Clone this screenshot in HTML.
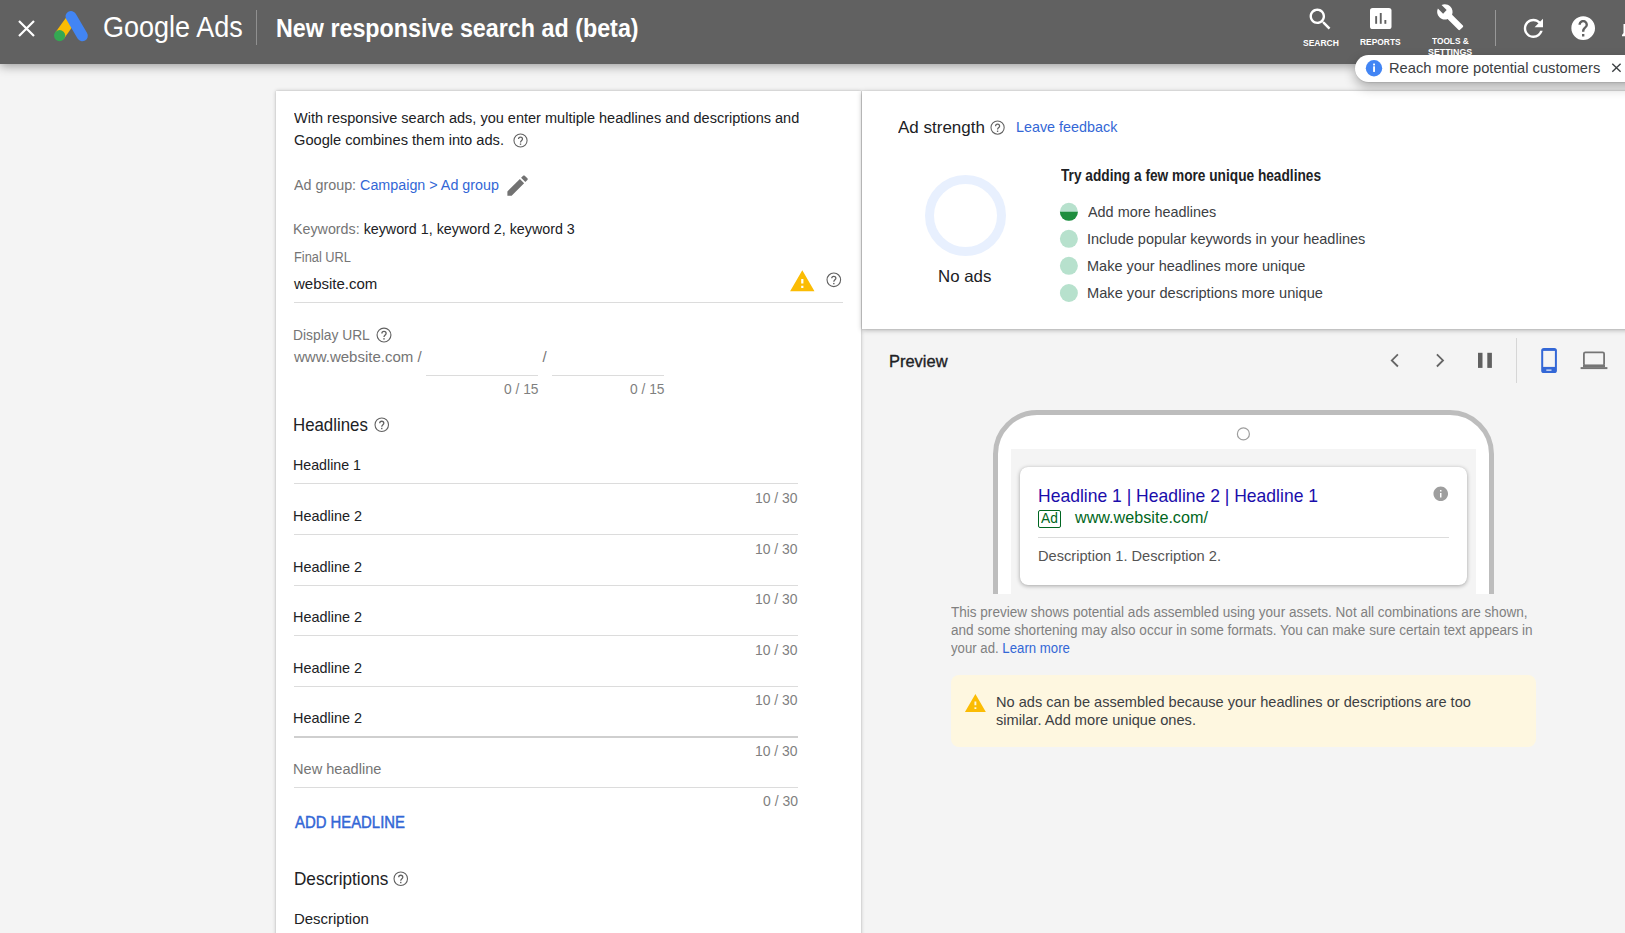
<!DOCTYPE html>
<html><head><meta charset="utf-8"><title>New responsive search ad (beta)</title>
<style>
html,body{margin:0;padding:0}
body{width:1625px;height:933px;overflow:hidden;position:relative;background:#f4f4f4;font-family:"Liberation Sans",sans-serif;color:#202124}
.a{position:absolute}
.tx{position:absolute;white-space:nowrap;transform-origin:0 0}
svg{position:absolute;overflow:visible}
.hl{position:absolute;height:1px;background:#dcdcdc}
</style></head><body>
<!-- left card -->
<div class="a" style="left:276px;top:91px;width:585px;height:900px;background:#fff;box-shadow:0 0 4px rgba(0,0,0,.22),0 0 1px rgba(0,0,0,.2)"></div>
<!-- right top card -->
<div class="a" style="left:862px;top:91px;width:800px;height:238px;background:#fff;box-shadow:0 1px 5px rgba(0,0,0,.3),0 0 1px rgba(0,0,0,.2)"></div>
<!-- header -->
<div class="a" style="left:0;top:0;width:1625px;height:64px;background:#616161;box-shadow:0 2px 10px rgba(0,0,0,.38)"></div>
<!-- close X -->
<svg style="left:0;top:0" width="1" height="1"><path d="M19 21 L34 36 M34 21 L19 36" stroke="#fff" stroke-width="2.2" fill="none"/></svg>
<!-- logo -->
<svg style="left:0;top:0" width="1" height="1">
<line x1="71.5" y1="19" x2="59.6" y2="35.6" stroke="#fbbc04" stroke-width="10.5" stroke-linecap="butt"/>
<circle cx="59.6" cy="35.6" r="5.6" fill="#34a853"/>
<line x1="71" y1="16.5" x2="82.3" y2="35.8" stroke="#4285f4" stroke-width="11" stroke-linecap="round"/>
</svg>
<div class="a" style="left:256px;top:10px;width:1px;height:35px;background:rgba(255,255,255,.3)"></div>
<!-- search icon -->
<svg style="left:1306.3px;top:5.1px" width="28.6" height="28.6" viewBox="0 0 24 24"><path fill="#fff" d="M15.5 14h-.79l-.28-.27C15.41 12.59 16 11.11 16 9.5 16 5.910 13.09 3 9.5 3S3 5.91 3 9.5 5.91 16 9.5 16c1.61 0 3.09-.59 4.23-1.57l.27.28v.79l5 4.99L20.49 19l-4.99-5zm-6 0C7.01 14 5 11.99 5 9.5S7.01 5 9.5 5 14 7.01 14 9.5 11.99 14 9.5 14z"/></svg>
<!-- reports icon -->
<svg style="left:0;top:0" width="1" height="1"><rect x="1370" y="8" width="21.5" height="21" rx="2.6" fill="#fff"/><rect x="1375.2" y="16.1" width="1.9" height="7.7" fill="#616161"/><rect x="1379.8" y="13" width="1.9" height="10.8" fill="#616161"/><rect x="1384.4" y="20" width="1.9" height="3.8" fill="#616161"/></svg>
<!-- wrench -->
<svg style="left:1435.9px;top:2.9px" width="28.4" height="28.4" viewBox="0 0 24 24"><path fill="#fff" d="M22.7 19l-9.1-9.1c.9-2.3.4-5-1.5-6.9-2-2-5-2.4-7.4-1.3L9 6 6 9 1.6 4.7C.4 7.1.9 10.1 2.9 12.1c1.9 1.9 4.6 2.4 6.9 1.5l9.1 9.1c.4.4 1 .4 1.4 0l2.3-2.3c.5-.4.5-1.1.1-1.4z"/></svg>
<div class="a" style="left:1495px;top:10px;width:1px;height:36px;background:rgba(255,255,255,.35)"></div>
<!-- refresh -->
<svg style="left:1519.4px;top:14.4px" width="28.8" height="28.8" viewBox="0 0 24 24"><path fill="#fff" d="M17.65 6.35C16.2 4.9 14.21 4 12 4c-4.42 0-7.99 3.58-7.99 8s3.57 8 7.99 8c3.73 0 6.84-2.55 7.73-6h-2.08c-.82 2.33-3.04 4-5.65 4-3.31 0-6-2.69-6-6s2.690-6 6-6c1.66 0 3.14.69 4.22 1.78L13 11h7V4l-2.35 2.35z"/></svg>
<!-- help -->
<svg style="left:1568.6px;top:14.1px" width="28.4" height="28.4" viewBox="0 0 24 24"><path fill="#fff" d="M12 2C6.48 2 2 6.48 2 12s4.48 10 10 10 10-4.48 10-10S17.52 2 12 2zm1 17h-2v-2h2v2zm2.07-7.75l-.9.92C13.45 12.9 13 13.5 13 15h-2v-.5c0-1.1.45-2.1 1.17-2.83l1.24-1.26c.37-.36.59-.86.59-1.41 0-1.1-.9-2-2-2s-2 .9-2 2H8c0-2.21 1.79-4 4-4s4 1.79 4 4c0 .88-.36 1.68-.93 2.25z"/></svg>
<!-- bell fragment -->
<svg style="left:0;top:0" width="1" height="1"><path d="M1623.5 24 V33 L1622 35 V36.2 H1625 V24z" fill="#fff"/></svg>
<!-- popup -->
<div class="a" style="left:1355px;top:55px;width:320px;height:27px;border-radius:13.5px;background:#fff;box-shadow:0 5px 12px rgba(0,0,0,.3),0 1px 1px rgba(0,0,0,.08)"></div>
<svg style="left:0;top:0" width="1" height="1"><circle cx="1374" cy="68.2" r="8.2" fill="#4285f4"/><rect x="1373.1" y="66.3" width="1.9" height="5.6" fill="#fff"/><rect x="1373.1" y="63.6" width="1.9" height="1.8" fill="#fff"/><path d="M1612.3 63.8 L1620.6 71.8 M1620.6 63.8 L1612.3 71.8" stroke="#3c4043" stroke-width="1.4"/></svg>
<svg style="left:512.18px;top:132.28px" width="17.04" height="17.04" viewBox="0 0 24 24"><circle cx="12" cy="12" r="9.25" fill="none" stroke="#616161" stroke-width="1.5"/><path d="M9.2 10 A2.8 2.8 0 0 1 14.8 10 C14.8 11.9 12 12.1 12 14.7" fill="none" stroke="#616161" stroke-width="1.75"/><rect x="11.05" y="16.2" width="1.9" height="1.9" fill="#616161"/></svg>
<svg style="left:504.10px;top:171.80px" width="27.10" height="27.10" viewBox="0 0 24 24"><path fill="#727272" d="M3 17.25V21h3.75L17.81 9.94l-3.75-3.75L3 17.25zM20.71 7.04c.39-.39.39-1.02 0-1.41l-2.34-2.34c-.39-.39-1.02-.39-1.41 0l-1.83 1.83 3.75 3.75 1.83-1.83z"/></svg>
<svg style="left:788.50px;top:268.00px" width="26.60" height="26.60" viewBox="0 0 24 24"><path fill="#fbbc04" d="M1 21h22L12 2 1 21zm12-3h-2v-2h2v2zm0-4h-2v-4h2v4z"/></svg>
<svg style="left:824.58px;top:270.98px" width="17.64" height="17.64" viewBox="0 0 24 24"><circle cx="12" cy="12" r="9.25" fill="none" stroke="#616161" stroke-width="1.5"/><path d="M9.2 10 A2.8 2.8 0 0 1 14.8 10 C14.8 11.9 12 12.1 12 14.7" fill="none" stroke="#616161" stroke-width="1.75"/><rect x="11.05" y="16.2" width="1.9" height="1.9" fill="#616161"/></svg>
<div class="a" style="left:294.0px;top:302.0px;width:549.0px;height:1.0px;background:#dcdcdc"></div>
<svg style="left:375.20px;top:326.00px" width="18.00" height="18.00" viewBox="0 0 24 24"><circle cx="12" cy="12" r="9.25" fill="none" stroke="#616161" stroke-width="1.5"/><path d="M9.2 10 A2.8 2.8 0 0 1 14.8 10 C14.8 11.9 12 12.1 12 14.7" fill="none" stroke="#616161" stroke-width="1.75"/><rect x="11.05" y="16.2" width="1.9" height="1.9" fill="#616161"/></svg>
<div class="a" style="left:426.0px;top:375.0px;width:112.0px;height:1.0px;background:#dcdcdc"></div>
<div class="a" style="left:552.0px;top:375.0px;width:112.0px;height:1.0px;background:#dcdcdc"></div>
<svg style="left:373.04px;top:416.14px" width="17.52" height="17.52" viewBox="0 0 24 24"><circle cx="12" cy="12" r="9.25" fill="none" stroke="#616161" stroke-width="1.5"/><path d="M9.2 10 A2.8 2.8 0 0 1 14.8 10 C14.8 11.9 12 12.1 12 14.7" fill="none" stroke="#616161" stroke-width="1.75"/><rect x="11.05" y="16.2" width="1.9" height="1.9" fill="#616161"/></svg>
<div class="a" style="left:294.0px;top:483.0px;width:504.0px;height:1.0px;background:#dcdcdc"></div>
<div class="a" style="left:294.0px;top:534.0px;width:504.0px;height:1.0px;background:#dcdcdc"></div>
<div class="a" style="left:294.0px;top:585.0px;width:504.0px;height:1.0px;background:#dcdcdc"></div>
<div class="a" style="left:294.0px;top:635.0px;width:504.0px;height:1.0px;background:#dcdcdc"></div>
<div class="a" style="left:294.0px;top:686.0px;width:504.0px;height:1.0px;background:#dcdcdc"></div>
<div class="a" style="left:294.0px;top:736.0px;width:504.0px;height:2.0px;background:#cfcfcf"></div>
<div class="a" style="left:294.0px;top:787.0px;width:504.0px;height:1.0px;background:#dcdcdc"></div>
<svg style="left:392.14px;top:870.44px" width="17.52" height="17.52" viewBox="0 0 24 24"><circle cx="12" cy="12" r="9.25" fill="none" stroke="#616161" stroke-width="1.5"/><path d="M9.2 10 A2.8 2.8 0 0 1 14.8 10 C14.8 11.9 12 12.1 12 14.7" fill="none" stroke="#616161" stroke-width="1.75"/><rect x="11.05" y="16.2" width="1.9" height="1.9" fill="#616161"/></svg>
<svg style="left:989.42px;top:118.72px" width="17.16" height="17.16" viewBox="0 0 24 24"><circle cx="12" cy="12" r="9.25" fill="none" stroke="#616161" stroke-width="1.5"/><path d="M9.2 10 A2.8 2.8 0 0 1 14.8 10 C14.8 11.9 12 12.1 12 14.7" fill="none" stroke="#616161" stroke-width="1.75"/><rect x="11.05" y="16.2" width="1.9" height="1.9" fill="#616161"/></svg>
<svg style="left:0;top:0" width="1" height="1"><circle cx="965.5" cy="215.5" r="36" fill="none" stroke="#e8f0fe" stroke-width="9"/></svg>
<svg style="left:0;top:0" width="1" height="1"><defs><clipPath id="bh"><rect x="1055" y="211.8" width="30" height="20"/></clipPath></defs><circle cx="1068.9" cy="211.8" r="9" fill="#b7e1cd"/><circle cx="1068.9" cy="238.8" r="9" fill="#b7e1cd"/><circle cx="1068.9" cy="265.8" r="9" fill="#b7e1cd"/><circle cx="1068.9" cy="293.0" r="9" fill="#b7e1cd"/><circle cx="1068.9" cy="211.8" r="9" fill="#1e8e3e" clip-path="url(#bh)"/></svg>
<svg style="left:0;top:0" width="1" height="1"><path d="M1397.9 354.3 L1391.8 360.4 L1397.9 366.5 M1436.9 354.3 L1443 360.4 L1436.9 366.5" fill="none" stroke="#656565" stroke-width="1.8"/></svg>
<svg style="left:0;top:0" width="1" height="1"><rect x="1478" y="352.8" width="4.5" height="15.1" fill="#616161"/><rect x="1487.3" y="352.8" width="4.6" height="15.1" fill="#616161"/></svg>
<div class="a" style="left:1516.0px;top:338.0px;width:1.0px;height:44.5px;background:#d6d6d6"></div>
<svg style="left:0;top:0" width="1" height="1"><rect x="1541.2" y="347.9" width="15.7" height="25.1" rx="2.6" fill="#3367d6"/><rect x="1543.2" y="350.9" width="11.7" height="16" fill="#f4f4f4"/><rect x="1546.3" y="369.5" width="5.2" height="1.3" fill="#dfe7f8"/></svg>
<svg style="left:0;top:0" width="1" height="1"><rect x="1583.9" y="352.3" width="20.2" height="13.2" rx="1.5" fill="none" stroke="#757575" stroke-width="1.8"/><rect x="1583" y="364.9" width="22" height="2.3" fill="#757575"/><rect x="1580.6" y="367.1" width="26.8" height="2" fill="#757575"/></svg>
<div class="a" style="left:0;top:0;width:1625px;height:594px;overflow:hidden"><div class="a" style="left:993px;top:410px;width:491px;height:400px;border:5px solid #bdbdbd;border-radius:44px;background:#fff"></div><div class="a" style="left:1011px;top:449px;width:465px;height:200px;background:#f4f4f4"></div><div class="a" style="left:1020px;top:467px;width:447px;height:118px;border-radius:8px;background:#fff;box-shadow:0 1px 4px rgba(0,0,0,.32),0 0 1px rgba(0,0,0,.1)"></div></div>
<svg style="left:0;top:0" width="1" height="1"><circle cx="1243.4" cy="433.9" r="6" fill="none" stroke="#9e9e9e" stroke-width="1.2"/></svg>
<svg style="left:1431.75px;top:485.15px" width="17.50" height="17.50" viewBox="0 0 24 24"><path fill="#9e9e9e" d="M12 2C6.48 2 2 6.48 2 12s4.48 10 10 10 10-4.48 10-10S17.52 2 12 2zm1 15h-2v-6h2v6zm0-8h-2V7h2v2z"/></svg>
<div class="a" style="left:1038.0px;top:537.0px;width:411.0px;height:1.0px;background:#dcdcdc"></div>
<div class="a" style="left:1038px;top:510px;width:21px;height:16px;border:1px solid #006621;border-radius:2px"></div>
<div class="a" style="left:951px;top:675px;width:585px;height:72px;border-radius:8px;background:#fef7e0"></div>
<svg style="left:964.20px;top:692.40px" width="22.80" height="22.80" viewBox="0 0 24 24"><path fill="#fbbc04" d="M1 21h22L12 2 1 21zm12-3h-2v-2h2v2zm0-4h-2v-4h2v4z"/></svg>
<div class="tx" style="left:103.31px;top:12px;font-size:30.23px;line-height:30.23px;font-weight:400;color:#ffffff;transform:scaleX(0.8942);">Google Ads</div>
<div class="tx" style="left:276.49px;top:16px;font-size:25.73px;line-height:25.73px;font-weight:700;color:#ffffff;transform:scaleX(0.9060);">New responsive search ad (beta)</div>
<div class="tx" style="left:1302.90px;top:38px;font-size:9.45px;line-height:9.45px;font-weight:700;color:#ffffff;transform:scaleX(0.9000);">SEARCH</div>
<div class="tx" style="left:1359.95px;top:37px;font-size:9.88px;line-height:9.88px;font-weight:700;color:#ffffff;transform:scaleX(0.8511);">REPORTS</div>
<div class="tx" style="left:1431.50px;top:36px;font-size:9.88px;line-height:9.88px;font-weight:700;color:#ffffff;transform:scaleX(0.8409);">TOOLS &amp;</div>
<div class="tx" style="left:1427.60px;top:47px;font-size:9.88px;line-height:9.88px;font-weight:700;color:#ffffff;transform:scaleX(0.8958);">SETTINGS</div>
<div class="tx" style="left:1388.52px;top:61px;font-size:14.97px;line-height:14.97px;font-weight:400;color:#3c4043;transform:scaleX(0.9804);">Reach more potential customers</div>
<div class="tx" style="left:294.30px;top:111px;font-size:14.68px;line-height:14.68px;font-weight:400;color:#202124;transform:scaleX(0.9896);">With responsive search ads, you enter multiple headlines and descriptions and</div>
<div class="tx" style="left:294.00px;top:133px;font-size:14.68px;line-height:14.68px;font-weight:400;color:#202124;transform:scaleX(0.9981);">Google combines them into ads.</div>
<div class="tx" style="left:294.20px;top:178px;font-size:14.68px;line-height:14.68px;font-weight:400;color:#757575;transform:scaleX(0.9757);">Ad group: <span style="color:#3367d6">Campaign &gt; Ad group</span></div>
<div class="tx" style="left:293.23px;top:222px;font-size:14.68px;line-height:14.68px;font-weight:400;color:#757575;transform:scaleX(0.9733);">Keywords: <span style="color:#202124">keyword 1, keyword 2, keyword 3</span></div>
<div class="tx" style="left:293.52px;top:250px;font-size:14.53px;line-height:14.53px;font-weight:400;color:#757575;transform:scaleX(0.8825);">Final URL</div>
<div class="tx" style="left:294.00px;top:277px;font-size:14.90px;line-height:14.90px;font-weight:400;color:#202124;transform:scaleX(1.0073);">website.com</div>
<div class="tx" style="left:293.28px;top:328px;font-size:14.97px;line-height:14.97px;font-weight:400;color:#757575;transform:scaleX(0.9232);">Display URL</div>
<div class="tx" style="left:294.00px;top:350px;font-size:14.96px;line-height:14.96px;font-weight:400;color:#757575;transform:scaleX(1.0047);">www.website.com /</div>
<div class="tx" style="left:542.40px;top:350px;font-size:14.97px;line-height:14.97px;font-weight:400;color:#757575;transform:scaleX(1.0000);">/</div>
<div class="tx" style="left:504.00px;top:383px;font-size:13.81px;line-height:13.81px;font-weight:400;color:#7f7f7f;transform:scaleX(1.0000);">0 / 15</div>
<div class="tx" style="left:630.00px;top:383px;font-size:13.81px;line-height:13.81px;font-weight:400;color:#7f7f7f;transform:scaleX(1.0000);">0 / 15</div>
<div class="tx" style="left:293.26px;top:417px;font-size:17.88px;line-height:17.88px;font-weight:400;color:#202124;transform:scaleX(0.9423);">Headlines</div>
<div class="tx" style="left:293.28px;top:457px;font-size:15.55px;line-height:15.55px;font-weight:400;color:#202124;transform:scaleX(0.9151);">Headline 1</div>
<div class="tx" style="left:293.27px;top:508px;font-size:15.55px;line-height:15.55px;font-weight:400;color:#202124;transform:scaleX(0.9288);">Headline 2</div>
<div class="tx" style="left:293.27px;top:559px;font-size:15.55px;line-height:15.55px;font-weight:400;color:#202124;transform:scaleX(0.9288);">Headline 2</div>
<div class="tx" style="left:293.27px;top:609px;font-size:15.55px;line-height:15.55px;font-weight:400;color:#202124;transform:scaleX(0.9288);">Headline 2</div>
<div class="tx" style="left:293.27px;top:660px;font-size:15.55px;line-height:15.55px;font-weight:400;color:#202124;transform:scaleX(0.9288);">Headline 2</div>
<div class="tx" style="left:293.27px;top:710px;font-size:15.55px;line-height:15.55px;font-weight:400;color:#202124;transform:scaleX(0.9288);">Headline 2</div>
<div class="tx" style="left:754.99px;top:492px;font-size:13.81px;line-height:13.81px;font-weight:400;color:#7f7f7f;transform:scaleX(1.0098);">10 / 30</div>
<div class="tx" style="left:754.99px;top:543px;font-size:13.81px;line-height:13.81px;font-weight:400;color:#7f7f7f;transform:scaleX(1.0098);">10 / 30</div>
<div class="tx" style="left:754.99px;top:593px;font-size:13.81px;line-height:13.81px;font-weight:400;color:#7f7f7f;transform:scaleX(1.0098);">10 / 30</div>
<div class="tx" style="left:754.99px;top:644px;font-size:13.81px;line-height:13.81px;font-weight:400;color:#7f7f7f;transform:scaleX(1.0098);">10 / 30</div>
<div class="tx" style="left:754.99px;top:694px;font-size:13.81px;line-height:13.81px;font-weight:400;color:#7f7f7f;transform:scaleX(1.0098);">10 / 30</div>
<div class="tx" style="left:754.99px;top:745px;font-size:13.81px;line-height:13.81px;font-weight:400;color:#7f7f7f;transform:scaleX(1.0098);">10 / 30</div>
<div class="tx" style="left:293.04px;top:761px;font-size:15.26px;line-height:15.26px;font-weight:400;color:#757575;transform:scaleX(0.9560);">New headline</div>
<div class="tx" style="left:763.00px;top:795px;font-size:13.81px;line-height:13.81px;font-weight:400;color:#7f7f7f;transform:scaleX(1.0118);">0 / 30</div>
<div class="tx" style="left:294.80px;top:815px;font-size:16.86px;line-height:16.86px;font-weight:400;color:#3367d6;transform:scaleX(0.8823);-webkit-text-stroke:0.5px #3367d6">ADD HEADLINE</div>
<div class="tx" style="left:293.53px;top:871px;font-size:17.59px;line-height:17.59px;font-weight:400;color:#202124;transform:scaleX(0.9747);">Descriptions</div>
<div class="tx" style="left:293.53px;top:911px;font-size:15.41px;line-height:15.41px;font-weight:400;color:#202124;transform:scaleX(0.9707);">Description</div>
<div class="tx" style="left:898.10px;top:120px;font-size:16.86px;line-height:16.86px;font-weight:400;color:#202124;transform:scaleX(1.0082);">Ad strength</div>
<div class="tx" style="left:1015.98px;top:119px;font-size:15.55px;line-height:15.55px;font-weight:400;color:#3367d6;transform:scaleX(0.9229);">Leave feedback</div>
<div class="tx" style="left:938.27px;top:268px;font-size:16.28px;line-height:16.28px;font-weight:400;color:#202124;transform:scaleX(1.0340);">No ads</div>
<div class="tx" style="left:1061.20px;top:167px;font-size:16.13px;line-height:16.13px;font-weight:700;color:#202124;transform:scaleX(0.8493);">Try adding a few more unique headlines</div>
<div class="tx" style="left:1087.60px;top:204px;font-size:15.55px;line-height:15.55px;font-weight:400;color:#3c4043;transform:scaleX(0.9268);">Add more headlines</div>
<div class="tx" style="left:1086.67px;top:231px;font-size:15.55px;line-height:15.55px;font-weight:400;color:#3c4043;transform:scaleX(0.9333);">Include popular keywords in your headlines</div>
<div class="tx" style="left:1086.67px;top:258px;font-size:15.55px;line-height:15.55px;font-weight:400;color:#3c4043;transform:scaleX(0.9326);">Make your headlines more unique</div>
<div class="tx" style="left:1086.66px;top:285px;font-size:15.55px;line-height:15.55px;font-weight:400;color:#3c4043;transform:scaleX(0.9418);">Make your descriptions more unique</div>
<div class="tx" style="left:888.63px;top:353px;font-size:17.01px;line-height:17.01px;font-weight:400;color:#202124;transform:scaleX(0.9683);-webkit-text-stroke:0.35px #202124">Preview</div>
<div class="tx" style="left:1037.66px;top:487px;font-size:18.60px;line-height:18.60px;font-weight:400;color:#1a0dab;transform:scaleX(0.9427);">Headline 1 | Headline 2 | Headline 1</div>
<div class="tx" style="left:1074.80px;top:509px;font-size:17.05px;line-height:17.05px;font-weight:400;color:#006621;transform:scaleX(0.9486);">www.website.com/</div>
<div class="tx" style="left:1040.90px;top:511px;font-size:14.53px;line-height:14.53px;font-weight:400;color:#006621;transform:scaleX(0.9471);">Ad</div>
<div class="tx" style="left:1037.62px;top:549px;font-size:14.97px;line-height:14.97px;font-weight:400;color:#545454;transform:scaleX(0.9778);">Description 1. Description 2.</div>
<div class="tx" style="left:951.40px;top:605px;font-size:14.24px;line-height:14.24px;font-weight:400;color:#808080;transform:scaleX(0.9512);">This preview shows potential ads assembled using your assets. Not all combinations are shown,</div>
<div class="tx" style="left:951.15px;top:623px;font-size:14.24px;line-height:14.24px;font-weight:400;color:#808080;transform:scaleX(0.9522);">and some shortening may also occur in some formats. You can make sure certain text appears in</div>
<div class="tx" style="left:951.40px;top:641px;font-size:14.24px;line-height:14.24px;font-weight:400;color:#808080;transform:scaleX(0.9273);">your ad. <span style="color:#3367d6">Learn more</span></div>
<div class="tx" style="left:995.73px;top:695px;font-size:14.97px;line-height:14.97px;font-weight:400;color:#3c4043;transform:scaleX(0.9739);">No ads can be assembled because your headlines or descriptions are too</div>
<div class="tx" style="left:995.72px;top:713px;font-size:14.97px;line-height:14.97px;font-weight:400;color:#3c4043;transform:scaleX(0.9768);">similar. Add more unique ones.</div>
</body></html>
